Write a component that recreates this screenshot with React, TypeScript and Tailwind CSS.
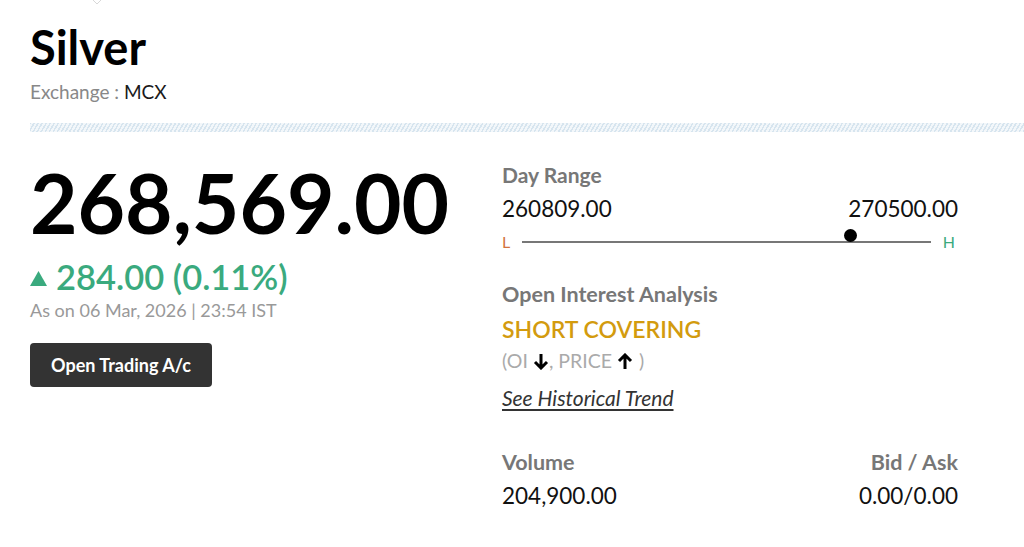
import React from 'react';

export default function App() {
  return (
    <div className="relative bg-white w-[1024px] h-[547px] overflow-hidden font-['Lato',sans-serif] text-[#111]">
      <svg className="absolute left-[89px] top-[-4px]" width="16" height="10" viewBox="0 0 16 10">
        <path d="M1 1 L8 8 L15 1" fill="none" stroke="#d8d8d8" strokeWidth="1" />
      </svg>

      <div className="pl-[30px] pt-[24px]">
        <h1 className="text-[47px] leading-[46px] font-bold text-black">Silver</h1>
        <p className="mt-[12px] text-[19px] leading-[20px] text-[#888]">
          Exchange : <span className="text-[#1a1a1a]">MCX</span>
        </p>
        <div className="mt-[21px] h-[9px] bg-[repeating-linear-gradient(-60deg,#d7e5ef_0px,#d7e5ef_1.5px,#f3f7fa_1.5px,#f3f7fa_3.5px)]" />
      </div>

      <div className="flex pl-[30px] pt-[29px]">
        <div className="w-[472px]">
          <div className="text-[82px] leading-[82px] font-bold text-black">268,569.00</div>
          <div className="mt-[17px] flex items-center gap-[9px] text-[#3aaa7e]">
            <svg width="17" height="15" viewBox="0 0 17 15" className="mt-[2px]">
              <path d="M8.5 0 L17 15 L0 15 Z" fill="#3aaa7e" />
            </svg>
            <span className="text-[34.5px] leading-[34px] font-semibold">284.00 (0.11%)</span>
          </div>
          <p className="mt-[6px] text-[18px] leading-[20px] text-[#999]">As on 06 Mar, 2026 | 23:54 IST</p>
          <button className="mt-[23px] h-[44px] w-[182px] rounded-[4px] bg-[#333] text-white text-[18px] font-bold">
            Open Trading A/c
          </button>
        </div>

        <div className="w-[456px] mt-[3px]">
          <p className="text-[21px] leading-[22px] font-bold text-[#777]">Day Range</p>
          <div className="mt-[11px] flex justify-between text-[22.5px] leading-[24px] text-[#111]">
            <span>260809.00</span>
            <span>270500.00</span>
          </div>
          <div className="mt-[12px] flex items-center h-[18px] gap-[12px] text-[16px] leading-[18px]">
            <span className="text-[#d2733f]">L</span>
            <div className="relative flex-1 h-[2px] bg-[#777]">
              <div className="absolute left-[322px] top-[-12px] w-[13px] h-[13px] rounded-full bg-black" />
            </div>
            <span className="text-[#3aaa7e] pr-[3px]">H</span>
          </div>

          <p className="mt-[31px] text-[21.5px] leading-[24px] font-bold text-[#777]">Open Interest Analysis</p>
          <p className="mt-[11px] text-[23px] leading-[24px] font-semibold text-[#d39b0e]">SHORT COVERING</p>
          <p className="mt-[9px] flex items-center text-[19.5px] leading-[22px] text-[#aaa]">
            (OI
            <svg width="16" height="17" viewBox="0 0 16 17" className="ml-[5px]">
              <path d="M8 1 V15 M2 9 L8 15 L14 9" fill="none" stroke="#000" strokeWidth="3" />
            </svg>
            , PRICE
            <svg width="16" height="17" viewBox="0 0 16 17" className="ml-[5px] mr-[6px]">
              <path d="M8 16 V2 M2 8 L8 2 L14 8" fill="none" stroke="#000" strokeWidth="3" />
            </svg>
            )
          </p>
          <a className="mt-[14px] inline-block text-[21px] leading-[24px] italic underline underline-offset-[3px] text-[#333]">See Historical Trend</a>

          <div className="mt-[38px] flex justify-between text-[21.5px] leading-[24px] font-bold text-[#777]">
            <span>Volume</span>
            <span>Bid / Ask</span>
          </div>
          <div className="mt-[10px] flex justify-between text-[22.5px] leading-[24px] text-[#111]">
            <span>204,900.00</span>
            <span>0.00/0.00</span>
          </div>
        </div>
      </div>
    </div>
  );
}
